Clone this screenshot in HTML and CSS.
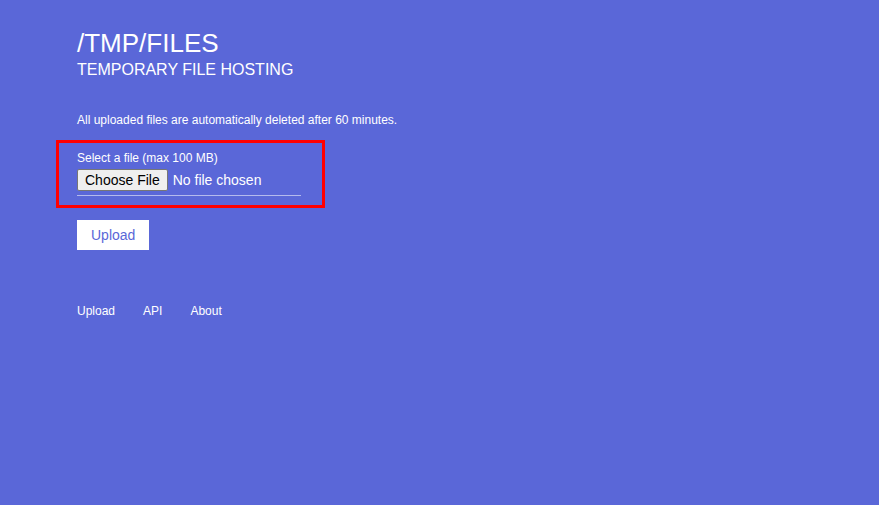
FILE: index.html
```html
<!DOCTYPE html>
<html lang="en">
<head>
<meta charset="utf-8">
<title>/TMP/FILES</title>
<link rel="stylesheet" href="styles.css">
</head>
<body>
<div class="page">
  <header class="header">
    <h1 class="title">/TMP/FILES</h1>
    <h2 class="subtitle">TEMPORARY FILE HOSTING</h2>
  </header>
  <p class="notice">All uploaded files are automatically deleted after 60 minutes.</p>
  <form class="form">
    <div class="field">
      <label class="label" for="file">Select a file (max 100 MB)</label>
      <input class="file-input" id="file" type="file">
    </div>
    <button class="upload-btn" type="button">Upload</button>
  </form>
  <nav class="nav">
    <a class="nav-link" href="#">Upload</a>
    <a class="nav-link" href="#">API</a>
    <a class="nav-link" href="#">About</a>
  </nav>
</div>
</body>
</html>
```
FILE: styles.css
```css
html, body {
  margin: 0;
  padding: 0;
}
body {
  background: #5a67d8;
  color: #ffffff;
  font-family: "Liberation Sans", Arial, sans-serif;
  width: 879px;
  height: 505px;
  overflow: hidden;
}
.page {
  padding: 28px 0 0 77px;
}
.title {
  margin: 0;
  font-size: 26px;
  line-height: 30px;
  font-weight: normal;
}
.subtitle {
  margin: 3px 0 0;
  font-size: 16px;
  line-height: 18px;
  font-weight: normal;
}
.notice {
  margin: 34px 0 0;
  font-size: 12px;
  line-height: 14px;
}
.form {
  margin-top: 13px;
  display: flex;
  flex-direction: column;
  align-items: flex-start;
}
.field {
  box-sizing: border-box;
  width: 269px;
  margin-left: -21px;
  padding: 8px 0 9px 18px;
  border: 3px solid #ff0000;
  display: flex;
  flex-direction: column;
  align-items: flex-start;
}
.label {
  font-size: 12px;
  line-height: 14px;
}
.file-input {
  margin: 4px 0 0;
  padding: 0 0 4px;
  width: 224px;
  font-family: "Liberation Sans", Arial, sans-serif;
  font-size: 14px;
  line-height: 16px;
  color: #ffffff;
  border: none;
  border-bottom: 1px solid rgba(255, 255, 255, 0.55);
  background: transparent;
}
.file-input::file-selector-button {
  font-family: "Liberation Sans", Arial, sans-serif;
  font-size: 14px;
  line-height: 16px;
  height: 22px;
  padding: 0 7px;
  margin: 0 5px 0 0;
  background: #efefef;
  color: #000000;
  border: 1px solid #767676;
  border-radius: 2px;
}
.upload-btn {
  margin-top: 12px;
  height: 30px;
  padding: 0 14px;
  border: none;
  background: #ffffff;
  color: #5a67d8;
  font-family: "Liberation Sans", Arial, sans-serif;
  font-size: 14px;
}
.nav {
  margin-top: 54px;
  display: flex;
  gap: 28px;
  font-size: 12px;
  line-height: 14px;
}
.nav-link {
  color: #ffffff;
  text-decoration: none;
}
```
